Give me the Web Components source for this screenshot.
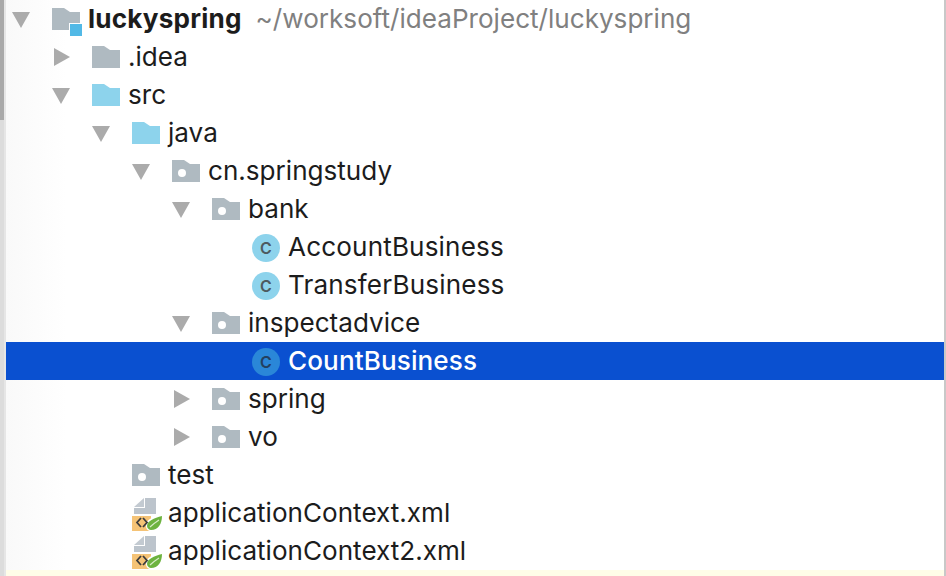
<!DOCTYPE html>
<html>
<head>
<meta charset="utf-8">
<title>luckyspring</title>
<style>
  html, body { margin: 0; height: 100%; overflow: hidden; background: #fff; }
</style>
</head>
<body>
<project-panel>
  <tree-row depth="0" arrow="down" icon="module"><b>luckyspring</b><span slot="hint">~/worksoft/ideaProject/luckyspring</span></tree-row>
  <tree-row depth="1" arrow="right" icon="folder">.idea</tree-row>
  <tree-row depth="1" arrow="down" icon="source">src</tree-row>
  <tree-row depth="2" arrow="down" icon="source">java</tree-row>
  <tree-row depth="3" arrow="down" icon="package">cn.springstudy</tree-row>
  <tree-row depth="4" arrow="down" icon="package">bank</tree-row>
  <tree-row depth="5" icon="class">AccountBusiness</tree-row>
  <tree-row depth="5" icon="class">TransferBusiness</tree-row>
  <tree-row depth="4" arrow="down" icon="package">inspectadvice</tree-row>
  <tree-row depth="5" icon="class" selected>CountBusiness</tree-row>
  <tree-row depth="4" arrow="right" icon="package">spring</tree-row>
  <tree-row depth="4" arrow="right" icon="package">vo</tree-row>
  <tree-row depth="2" icon="package">test</tree-row>
  <tree-row depth="2" icon="xml">applicationContext.xml</tree-row>
  <tree-row depth="2" icon="xml">applicationContext2.xml</tree-row>
</project-panel>

<script>
class ProjectPanel extends HTMLElement {
  constructor() {
    super();
    this.attachShadow({ mode: 'open' });
  }

  connectedCallback() {
    this.shadowRoot.innerHTML = `
      <style>
        :host {
          display: grid;
          grid-template-columns: 6px 1fr 2px;
          height: 576px;
          font-family: "Inter", "Liberation Sans", sans-serif;
          font-size: 26.1px;
          color: #1c1c1c;
        }
        .gutter {
          background: linear-gradient(90deg, #dcdcdc 0 4px, #e6e6e6 4px);
        }
        .thumb {
          width: 4px;
          height: 120px;
          background: #a9a9a9;
        }
        .tree {
          display: flex;
          flex-direction: column;
          overflow: hidden;
          background: linear-gradient(90deg, #f9f9f9, #fff 60px);
        }
        .rows { height: 570px; overflow: hidden; flex: none; }
        .foot { flex: 1; background: #fffde8; }
        .edge { background: #c8c8c8; }
      </style>
      <div class="gutter"><div class="thumb"></div></div>
      <div class="tree">
        <div class="rows"><slot></slot></div>
        <div class="foot"></div>
      </div>
      <div class="edge"></div>
    `;
  }
}

const ICONS = {
  folder: `<svg width="30" height="30" viewBox="0 0 30 30"><path d="M0 0H12L18 4H28V22H0Z" fill="#afbac1"/></svg>`,
  source: `<svg width="30" height="30" viewBox="0 0 30 30"><path d="M0 0H12L18 4H28V22H0Z" fill="#8dd3ec"/></svg>`,
  package: `<svg width="30" height="30" viewBox="0 0 30 30"><path d="M0 0H12L18 4H28V22H0Z" fill="#afbac1"/><circle cx="10" cy="13" r="4" fill="#fff"/></svg>`,
  module: `<svg width="32" height="30" viewBox="0 0 32 30" style="overflow:visible"><path d="M0 0H12L18 4H28V22H0Z" fill="#afbac1"/><rect x="17" y="15" width="15" height="15" fill="#fff"/><rect x="18" y="16" width="12" height="12" fill="#52b9e6"/></svg>`,
  xml: `<svg width="32" height="38" viewBox="0 0 32 38">
    <path d="M2 13L12 4V13Z" fill="#c3cad1"/>
    <path d="M13 4H24V20H2V14H13Z" fill="#bcc4cc"/>
    <rect x="0" y="22" width="19" height="15" fill="#f5c376"/>
    <path d="M14 32C13 26 21 22 31 21C31 30 27 37 19 37C16 37 14 35 14 32Z" fill="#fff"/>
    <path d="M15 32C15 27 22 24 30 22C30 30 26 36 19 36C17 36 15 34 15 32Z" fill="#6db33f"/>
    <path d="M18 33C21 30 24 28 27 26" fill="none" stroke="#d8ecc8" stroke-width="1.2"/>
    <path d="M9 24L5 28.5L9 33M11 24L15 28.5L11 33" fill="none" stroke="#3c3c3c" stroke-width="1.8"/>
  </svg>`
};

class TreeRow extends HTMLElement {
  constructor() {
    super();
    this.attachShadow({ mode: 'open' });
  }

  connectedCallback() {
    const depth = Number(this.getAttribute('depth') || 0);
    const arrow = this.getAttribute('arrow');
    const icon = this.getAttribute('icon');
    const selected = this.hasAttribute('selected');

    let arrowSvg = '';
    if (arrow === 'down') {
      arrowSvg = `<svg width="18" height="38" viewBox="0 0 18 38"><polygon points="0,12 18,12 9,28" fill="#ababab"/></svg>`;
    } else if (arrow === 'right') {
      arrowSvg = `<svg width="18" height="38" viewBox="0 0 18 38"><polygon points="2,10 18,19 2,28" fill="#ababab"/></svg>`;
    }

    let iconHtml;
    if (icon === 'class') {
      iconHtml = `<span class="cls">C</span>`;
    } else {
      iconHtml = ICONS[icon] || '';
    }

    this.shadowRoot.innerHTML = `
      <style>
        :host {
          display: flex;
          align-items: center;
          height: 38px;
          padding-left: calc(${depth} * 40px + 6px);
          white-space: nowrap;
          background: ${selected ? '#0a50d0' : 'transparent'};
          color: ${selected ? '#fff' : 'inherit'};
        }
        .arrow { display: block; width: 40px; height: 38px; flex: none; }
        .arrow svg { display: block; }
        .icon { width: 36px; height: 38px; flex: none; }
        .icon svg { display: block; margin-top: 8px; }
        .icon.xml svg { margin-top: 0; }
        .cls {
          display: flex;
          align-items: center;
          justify-content: center;
          width: 28px;
          height: 28px;
          margin-top: 6px;
          border-radius: 50%;
          background: ${selected ? '#2a87d8' : '#8dd3ec'};
          color: ${selected ? '#23405f' : '#4d5a60'};
          font: 600 16px "Inter", "Liberation Sans", sans-serif;
        }
        .text {
          padding-bottom: 2px;
          font-weight: ${selected ? '500' : '400'};
          letter-spacing: ${selected ? '0.1px' : icon === 'class' ? '0.15px' : '0'};
        }
        ::slotted(b) { font-weight: 700; letter-spacing: 0.2px; }
        ::slotted([slot="hint"]) { color: #808080; margin-left: 14px; }
      </style>
      <span class="arrow">${arrowSvg}</span>
      <span class="icon ${icon}">${iconHtml}</span>
      <span class="text"><slot></slot><slot name="hint"></slot></span>
    `;
  }
}

customElements.define('project-panel', ProjectPanel);
customElements.define('tree-row', TreeRow);
</script>
</body>
</html>
